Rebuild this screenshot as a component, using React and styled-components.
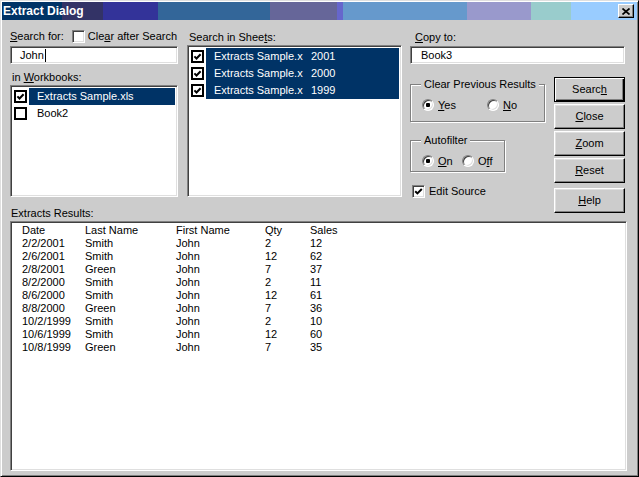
import styled, { createGlobalStyle } from 'styled-components';

const GlobalStyle = createGlobalStyle`
  html, body {
    margin: 0;
    padding: 0;
    background: #cccccc;
  }
  body {
    font-family: "Liberation Sans", Arial, sans-serif;
    font-size: 11px;
    color: #000;
  }
`;

const Window = styled.div`
  width: 639px;
  height: 477px;
  box-sizing: border-box;
  background: #cccccc;
  border: 1px solid;
  border-color: #dfdfdf #000 #000 #dfdfdf;
  box-shadow: inset 1px 1px 0 #fff, inset -1px -1px 0 #808080;
  padding: 1px;
  display: flex;
  flex-direction: column;
  line-height: 13px;
`;

const TitleBar = styled.div`
  height: 18px;
  flex-shrink: 0;
  display: flex;
  align-items: center;
  padding-left: 1px;
  background: linear-gradient(
    to right,
    #003366 0 60px,
    #333366 60px 101px,
    #333399 101px 156px,
    #336699 156px 268px,
    #666699 268px 335px,
    #6666cc 335px 341px,
    #6699cc 341px 465px,
    #9999cc 465px 529px,
    #99cccc 529px 569px,
    #99ccff 569px 100%
  );
`;

const Title = styled.span`
  color: #fff;
  font-weight: bold;
  font-size: 12px;
`;

const CloseBox = styled.div`
  margin-left: auto;
  margin-right: 3px;
  width: 16px;
  height: 14px;
  box-sizing: border-box;
  background: #cccccc;
  border: 1px solid;
  border-color: #fff #000 #000 #fff;
  box-shadow: inset -1px -1px 0 #808080;
  display: flex;
  align-items: center;
  justify-content: center;
`;

const Content = styled.div`
  flex: 1;
  display: flex;
  flex-direction: column;
  padding: 9px 10px 0 8px;
`;

const TopRow = styled.div`
  display: flex;
  height: 177px;
  flex-shrink: 0;
`;

const Column = styled.div`
  display: flex;
  flex-direction: column;
  width: ${(p) => p.$w}px;
  margin-left: ${(p) => p.$ml || 0}px;
  flex-shrink: 0;

  & > * {
    flex-shrink: 0;
  }
`;

const LabelRow = styled.div`
  display: flex;
  align-items: center;
  height: ${(p) => p.$h}px;
  padding-left: ${(p) => p.$pl || 0}px;
  padding-top: ${(p) => p.$pt || 0}px;
  box-sizing: border-box;
  white-space: nowrap;
`;

const Key = styled.span`
  text-decoration: underline;
`;

const Field = styled.div`
  height: 18px;
  box-sizing: border-box;
  background: #fff;
  border: 1px solid;
  border-color: #808080 #fff #fff #808080;
  box-shadow: inset 1px 1px 0 #404040, inset -1px -1px 0 #dfdfdf;
  display: flex;
  align-items: center;
  padding-left: ${(p) => p.$pl}px;
  margin-top: ${(p) => p.$mt || 0}px;
`;

const Caret = styled.span`
  display: inline-block;
  width: 1px;
  height: 13px;
  background: #000;
  margin-left: 1px;
`;

const ListBox = styled.div`
  height: ${(p) => p.$h}px;
  box-sizing: border-box;
  background: #fff;
  border: 1px solid;
  border-color: #808080 #fff #fff #808080;
  box-shadow: inset 1px 1px 0 #404040, inset -1px -1px 0 #dfdfdf;
  padding: 2px;
`;

const ListRow = styled.div`
  display: flex;
  align-items: center;
  height: 17px;
`;

const ListText = styled.div`
  flex: 1;
  align-self: stretch;
  display: flex;
  align-items: center;
  margin-left: 2px;
  padding-left: 8px;
  white-space: nowrap;
  background: ${(p) => (p.$selected ? '#003366' : 'transparent')};
  color: ${(p) => (p.$selected ? '#fff' : '#000')};
`;

const Cell = styled.span`
  width: ${(p) => p.$w}px;
  overflow: hidden;
  flex-shrink: 0;
`;

const SunkenCheck = styled.span`
  display: inline-flex;
  width: 13px;
  height: 13px;
  box-sizing: border-box;
  background: #fff;
  border: 1px solid;
  border-color: #808080 #fff #fff #808080;
  box-shadow: inset 1px 1px 0 #404040, inset -1px -1px 0 #dfdfdf;
  margin-left: ${(p) => p.$ml || 0}px;
  margin-right: ${(p) => p.$mr || 0}px;
  flex-shrink: 0;
  align-items: center;
  justify-content: center;
`;

const LowerRow = styled.div`
  display: flex;
  margin-top: 13px;
`;

const Group = styled.fieldset`
  margin: ${(p) => p.$mt}px 0 0 0;
  padding: ${(p) => p.$pt}px 0 ${(p) => p.$pb}px 10px;
  width: ${(p) => p.$w}px;
  min-width: 0;
  box-sizing: border-box;
  border: 1px solid #808080;
  box-shadow: 1px 1px 0 #fff, inset 1px 1px 0 #fff;
`;

const Legend = styled.legend`
  padding: 0 3px;
  line-height: 13px;
  background: #cccccc;
`;

const RadioRow = styled.div`
  display: flex;
  align-items: center;
  height: 14px;
  padding-left: 1px;
`;

const RadioOption = styled.label`
  display: flex;
  align-items: center;
  width: ${(p) => p.$w}px;
  flex-shrink: 0;
`;

const RadioDot = styled.span`
  position: relative;
  width: 12px;
  height: 12px;
  box-sizing: border-box;
  border-radius: 50%;
  background: #fff;
  border: 1px solid;
  border-color: #808080 #fff #fff #808080;
  box-shadow: inset 1px 1px 0 #404040, inset -1px -1px 0 #dfdfdf;
  margin-right: 4px;
  flex-shrink: 0;

  &::after {
    content: '';
    display: ${(p) => (p.$on ? 'block' : 'none')};
    position: absolute;
    left: 3px;
    top: 3px;
    width: 4px;
    height: 4px;
    border-radius: 1px;
    background: #000;
  }
`;

const CheckRow = styled.div`
  display: flex;
  align-items: center;
  height: 14px;
  margin-top: 12px;
`;

const ButtonCol = styled.div`
  display: flex;
  flex-direction: column;
  width: 71px;
  margin-left: 9px;
  flex-shrink: 0;
`;

const Button = styled.div`
  height: 25px;
  flex-shrink: 0;
  box-sizing: border-box;
  margin-top: ${(p) => p.$mt || 0}px;
  display: flex;
  align-items: center;
  justify-content: center;
  background: #cccccc;
  border: 1px solid;
  border-color: ${(p) => (p.$default ? '#000' : '#fff #000 #000 #fff')};
  box-shadow: ${(p) =>
    p.$default
      ? 'inset 1px 1px 0 #fff, inset -1px -1px 0 #000, inset -2px -2px 0 #808080'
      : 'inset -1px -1px 0 #808080, inset 1px 1px 0 #dfdfdf'};
`;

const ResultsLabel = styled.div`
  height: 15px;
  flex-shrink: 0;
  display: flex;
  align-items: center;
  padding-left: 1px;
`;

const ResultsBox = styled.div`
  height: 250px;
  flex-shrink: 0;
  box-sizing: border-box;
  background: #fff;
  border: 1px solid;
  border-color: #808080 #fff #fff #808080;
  box-shadow: inset 1px 1px 0 #404040, inset -1px -1px 0 #dfdfdf;
  padding: 2px 0 0 11px;
`;

const ResultRow = styled.div`
  display: grid;
  grid-template-columns: 63px 91px 89px 45px 60px;
  height: 13px;
  white-space: nowrap;
`;

function Tick() {
  return (
    <svg width="9" height="9" viewBox="0 0 9 9">
      <path d="M1.2 4.2 L3.4 6.4 L7.8 2" fill="none" stroke="#000" strokeWidth="2" />
    </svg>
  );
}

function ListCheck() {
  return (
    <svg width="13" height="13" viewBox="0 0 13 13" style={{ flexShrink: 0, marginLeft: 1 }}>
      <rect x="1" y="1" width="11" height="11" fill="#fff" stroke="#000" strokeWidth="2" />
      <path d="M3.4 6.4 L5.5 8.5 L9.6 4.2" fill="none" stroke="#000" strokeWidth="2" />
    </svg>
  );
}

function ListBlank() {
  return (
    <svg width="13" height="13" viewBox="0 0 13 13" style={{ flexShrink: 0, marginLeft: 1 }}>
      <rect x="1" y="1" width="11" height="11" fill="#fff" stroke="#000" strokeWidth="2" />
    </svg>
  );
}

const sheets = ['2001', '2000', '1999'];

const results = [
  ['Date', 'Last Name', 'First Name', 'Qty', 'Sales'],
  ['2/2/2001', 'Smith', 'John', '2', '12'],
  ['2/6/2001', 'Smith', 'John', '12', '62'],
  ['2/8/2001', 'Green', 'John', '7', '37'],
  ['8/2/2000', 'Smith', 'John', '2', '11'],
  ['8/6/2000', 'Smith', 'John', '12', '61'],
  ['8/8/2000', 'Green', 'John', '7', '36'],
  ['10/2/1999', 'Smith', 'John', '2', '10'],
  ['10/6/1999', 'Smith', 'John', '12', '60'],
  ['10/8/1999', 'Green', 'John', '7', '35'],
];

export default function App() {
  return (
    <>
      <GlobalStyle />
      <Window>
        <TitleBar>
          <Title>Extract Dialog</Title>
          <CloseBox>
            <svg width="8" height="7" viewBox="0 0 8 7">
              <path d="M0.5 0.5 L7.5 6.5 M7.5 0.5 L0.5 6.5" stroke="#000" strokeWidth="1.7" />
            </svg>
          </CloseBox>
        </TitleBar>

        <Content>
          <TopRow>
            <Column $w={168}>
              <LabelRow $h={15}>
                <span>
                  <Key>S</Key>earch for:
                </span>
                <SunkenCheck $ml={8} $mr={3} />
                <span>
                  Cle<Key>a</Key>r after Search
                </span>
              </LabelRow>
              <Field $pl={9} $mt={2}>
                John
                <Caret />
              </Field>
              <LabelRow $h={21} $pt={5} $pl={2}>
                <span>
                  in <Key>W</Key>orkbooks:
                </span>
              </LabelRow>
              <ListBox $h={112}>
                <ListRow>
                  <ListCheck />
                  <ListText $selected>Extracts Sample.xls</ListText>
                </ListRow>
                <ListRow>
                  <ListBlank />
                  <ListText>Book2</ListText>
                </ListRow>
              </ListBox>
            </Column>

            <Column $w={215} $ml={9}>
              <LabelRow $h={16} $pl={2}>
                <span>
                  Search in Shee<Key>t</Key>s:
                </span>
              </LabelRow>
              <ListBox $h={152}>
                {sheets.map((s) => (
                  <ListRow key={s}>
                    <ListCheck />
                    <ListText $selected>
                      <Cell $w={97}>Extracts Sample.x</Cell>
                      <span>{s}</span>
                    </ListText>
                  </ListRow>
                ))}
              </ListBox>
            </Column>

            <Column $w={215} $ml={8}>
              <LabelRow $h={17} $pl={5}>
                <span>
                  <Key>C</Key>opy to:
                </span>
              </LabelRow>
              <Field $pl={10}>Book3</Field>
              <LowerRow>
                <Column $w={135}>
                  <Group $w={135} $mt={1} $pt={7} $pb={9}>
                    <Legend>Clear Previous Results</Legend>
                    <RadioRow>
                      <RadioOption $w={65}>
                        <RadioDot $on />
                        <span>
                          <Key>Y</Key>es
                        </span>
                      </RadioOption>
                      <RadioOption $w={40}>
                        <RadioDot />
                        <span>
                          <Key>N</Key>o
                        </span>
                      </RadioOption>
                    </RadioRow>
                  </Group>
                  <Group $w={95} $mt={12} $pt={7} $pb={3}>
                    <Legend>Autofilter</Legend>
                    <RadioRow>
                      <RadioOption $w={40}>
                        <RadioDot $on />
                        <span>
                          <Key>O</Key>n
                        </span>
                      </RadioOption>
                      <RadioOption $w={40}>
                        <RadioDot />
                        <span>
                          O<Key>f</Key>f
                        </span>
                      </RadioOption>
                    </RadioRow>
                  </Group>
                  <CheckRow>
                    <SunkenCheck $ml={2} $mr={4}>
                      <Tick />
                    </SunkenCheck>
                    <span>Edit Source</span>
                  </CheckRow>
                </Column>
                <ButtonCol>
                  <Button $default>
                    <span>
                      Searc<Key>h</Key>
                    </span>
                  </Button>
                  <Button $mt={2}>
                    <span>
                      <Key>C</Key>lose
                    </span>
                  </Button>
                  <Button $mt={2}>
                    <span>
                      <Key>Z</Key>oom
                    </span>
                  </Button>
                  <Button $mt={2}>
                    <span>
                      <Key>R</Key>eset
                    </span>
                  </Button>
                  <Button $mt={5}>
                    <span>
                      <Key>H</Key>elp
                    </span>
                  </Button>
                </ButtonCol>
              </LowerRow>
            </Column>
          </TopRow>

          <ResultsLabel>Extracts Results:</ResultsLabel>
          <ResultsBox>
            {results.map((row, i) => (
              <ResultRow key={i}>
                {row.map((c, j) => (
                  <span key={j}>{c}</span>
                ))}
              </ResultRow>
            ))}
          </ResultsBox>
        </Content>
      </Window>
    </>
  );
}
